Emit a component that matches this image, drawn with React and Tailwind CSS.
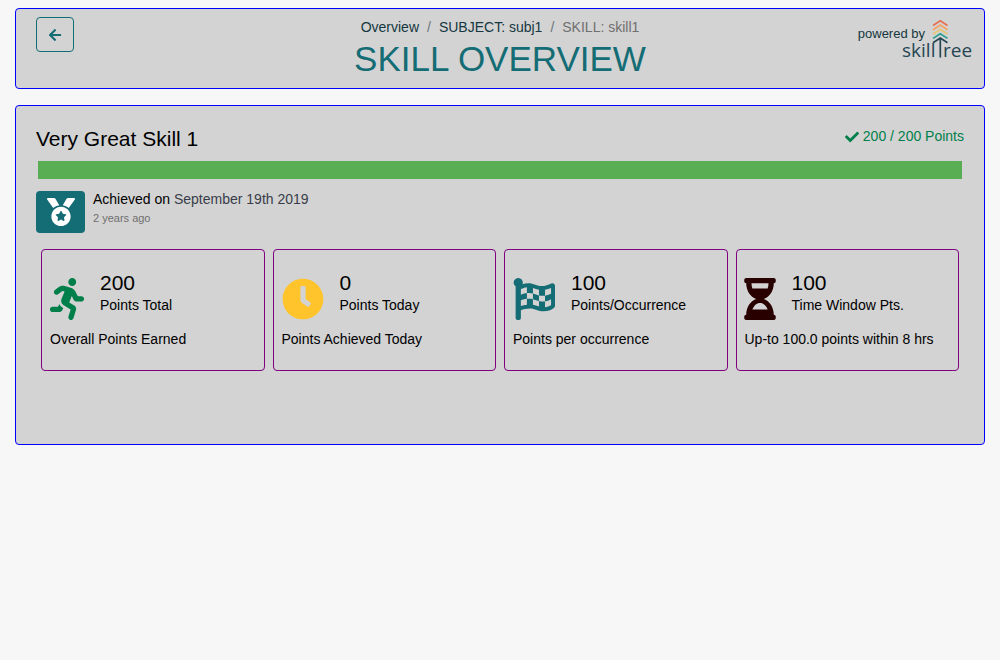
import { FaArrowLeft, FaCheck, FaMedal, FaRunning, FaClock, FaFlagCheckered, FaHourglassHalf } from "react-icons/fa";

const stats = [
  { Icon: FaRunning, color: "text-[#007f4b]", value: "200", label: "Points Total", note: "Overall Points Earned", box: "w-[34px]" },
  { Icon: FaClock, color: "text-[#ffc42b]", value: "0", label: "Points Today", note: "Points Achieved Today", box: "w-[42px]" },
  { Icon: FaFlagCheckered, color: "text-[#146c75]", value: "100", label: "Points/Occurrence", note: "Points per occurrence", box: "w-[42px]" },
  { Icon: FaHourglassHalf, color: "text-[#280000]", value: "100", label: "Time Window Pts.", note: "Up-to 100.0 points within 8 hrs", box: "w-[31px]" },
];

function Logo() {
  return (
    <svg viewBox="0 0 72 46" className="h-[46px] w-[72px]" role="img" aria-label="skilltree">
      <g fill="none" strokeWidth="1.7">
        <path d="M31 8.5 L38.3 3.8 L45.5 8.5" stroke="#e76f51" />
        <path d="M31 12.8 L38.3 8.1 L45.5 12.8" stroke="#f4a261" />
        <path d="M31 17.1 L38.3 12.4 L45.5 17.1" stroke="#e9c46a" />
        <path d="M31 21.4 L38.3 16.7 L45.5 21.4" stroke="#2a9d8f" />
        <path d="M31 25.7 L38.3 21 L45.5 25.7 M38.3 21 V40.5" stroke="#264653" />
      </g>
      <g fill="#264653" fontFamily="'Open Sans', sans-serif" fontSize="19">
        <text x="0" y="40">skill</text>
        <text x="41" y="40">ree</text>
      </g>
    </svg>
  );
}

export default function App() {
  return (
    <div className="min-h-screen bg-[#f7f7f7] px-[15px] py-2 font-['Liberation_Sans',Arial,sans-serif] text-sm leading-[21px] text-black">
      <header className="grid grid-cols-[1fr_auto_1fr] items-start rounded border border-[blue] bg-[#d3d3d3] px-5 py-2">
        <button type="button" aria-label="Back" className="flex h-[35px] w-[38px] items-center justify-center rounded border border-[#146c75] text-[#146c75]">
          <FaArrowLeft />
        </button>
        <div className="text-center">
          <nav aria-label="Breadcrumb" className="flex justify-center gap-2">
            <a href="#overview" className="text-[#143740]">Overview</a>
            <span className="text-[#6c757d]">/</span>
            <a href="#subject" className="text-[#143740]">SUBJECT: subj1</a>
            <span className="text-[#6c757d]">/</span>
            <span className="text-[#6f6f6f]">SKILL: skill1</span>
          </nav>
          <h1 className="text-[35px] leading-[42px] text-[#146c75]">SKILL OVERVIEW</h1>
        </div>
        <div className="-mr-[10px] flex items-start justify-end text-[#143740]">
          <span className="-mr-[23px] pt-[6px] text-[13px]">powered by</span>
          <Logo />
        </div>
      </header>

      <main className="mt-4 rounded border border-[blue] bg-[#d3d3d3] px-5 pt-5 pb-[73px]">
        <div className="flex items-start justify-between">
          <h2 className="text-[21px] leading-[25px]">Very Great Skill 1</h2>
          <div className="flex items-center gap-1 text-[#007f4b]">
            <FaCheck />
            <span>200 / 200 Points</span>
          </div>
        </div>
        <div role="progressbar" aria-label="Skill points" aria-valuenow={200} aria-valuemax={200} className="mx-[2px] mt-[10px] h-[18px] bg-[#59ad52]" />
        <div className="mt-3 flex gap-2">
          <div className="flex h-[42px] w-[49px] items-center justify-center rounded bg-[#146c75] text-[28px] text-white">
            <FaMedal />
          </div>
          <div>
            <p className="leading-[17px]">
              Achieved on <span className="text-[#383d49]">September 19th 2019</span>
            </p>
            <p className="text-[11px] text-[#6f6f6f]">2 years ago</p>
          </div>
        </div>
        <div className="mx-[5px] mt-4 grid grid-cols-4 gap-2">
          {stats.map(({ Icon, color, value, label, note, box }) => (
            <section key={label} className="rounded border border-[purple] px-2 pt-5 pb-5">
              <div className="flex items-start gap-4">
                <div className={`flex h-[42px] shrink-0 justify-center mt-2 text-[42px] ${box} ${color}`}>
                  <Icon className="shrink-0" />
                </div>
                <div>
                  <div className="text-[21px] leading-[25px]">{value}</div>
                  <div>{label}</div>
                </div>
              </div>
              <p className="mt-[9px]">{note}</p>
            </section>
          ))}
        </div>
      </main>
    </div>
  );
}
